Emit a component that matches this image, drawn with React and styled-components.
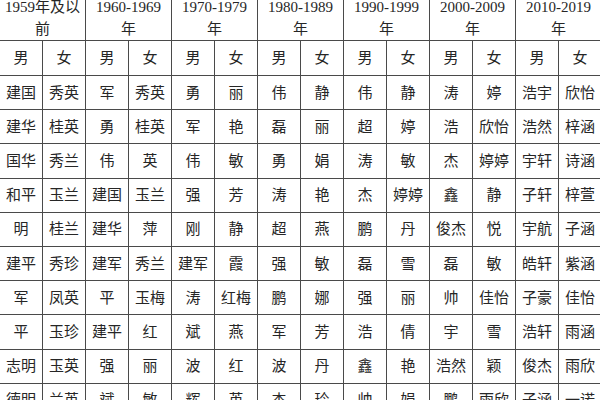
import React from 'react'
import styled, { createGlobalStyle } from 'styled-components'

const GlobalStyle = createGlobalStyle`
  html, body {
    margin: 0;
    padding: 0;
    background: #fff;
    overflow: hidden;
  }
`

const Page = styled.div`
  width: 600px;
  height: 400px;
  overflow: hidden;
`

const NameTable = styled.table`
  table-layout: fixed;
  border-collapse: separate;
  border-spacing: 0;
  width: 602px;
  margin-top: -4px;
  font-family: 'Liberation Serif', 'Noto Sans CJK SC', serif;
  font-size: 15px;
  color: #262626;
`

const Col = styled.col`
  width: 43px;
`

const HeadCell = styled.th`
  height: 45px;
  padding: 0;
  font-weight: 400;
  line-height: 22px;
  text-align: center;
  vertical-align: middle;
  border-right: 1px solid #4a4a4a;
  border-bottom: 1px solid #4a4a4a;
  box-sizing: border-box;
  white-space: nowrap;
`

const Row = styled.tr`
  height: ${p => p.$h}px;
`

const Cell = styled.td`
  padding: 0;
  text-align: center;
  vertical-align: middle;
  line-height: 18px;
  border-right: 1px solid #4a4a4a;
  border-bottom: 1px solid #4a4a4a;
  box-sizing: border-box;
  white-space: nowrap;
  overflow: hidden;
`

const groups = [
  ['1959年及以', '前'],
  ['1960-1969', '年'],
  ['1970-1979', '年'],
  ['1980-1989', '年'],
  ['1990-1999', '年'],
  ['2000-2009', '年'],
  ['2010-2019', '年'],
]

const rows = [
  ['建国', '秀英', '军', '秀英', '勇', '丽', '伟', '静', '伟', '静', '涛', '婷', '浩宇', '欣怡'],
  ['建华', '桂英', '勇', '桂英', '军', '艳', '磊', '丽', '超', '婷', '浩', '欣怡', '浩然', '梓涵'],
  ['国华', '秀兰', '伟', '英', '伟', '敏', '勇', '娟', '涛', '敏', '杰', '婷婷', '宇轩', '诗涵'],
  ['和平', '玉兰', '建国', '玉兰', '强', '芳', '涛', '艳', '杰', '婷婷', '鑫', '静', '子轩', '梓萱'],
  ['明', '桂兰', '建华', '萍', '刚', '静', '超', '燕', '鹏', '丹', '俊杰', '悦', '宇航', '子涵'],
  ['建平', '秀珍', '建军', '秀兰', '建军', '霞', '强', '敏', '磊', '雪', '磊', '敏', '皓轩', '紫涵'],
  ['军', '凤英', '平', '玉梅', '涛', '红梅', '鹏', '娜', '强', '丽', '帅', '佳怡', '子豪', '佳怡'],
  ['平', '玉珍', '建平', '红', '斌', '燕', '军', '芳', '浩', '倩', '宇', '雪', '浩轩', '雨涵'],
  ['志明', '玉英', '强', '丽', '波', '红', '波', '丹', '鑫', '艳', '浩然', '颖', '俊杰', '雨欣'],
  ['德明', '兰英', '斌', '敏', '辉', '英', '杰', '玲', '帅', '娟', '鹏', '雨欣', '子涵', '一诺'],
]

export default function App() {
  return (
    <Page>
      <GlobalStyle />
      <NameTable>
        <colgroup>
          {Array.from({ length: 14 }).map((_, i) => <Col key={i} />)}
        </colgroup>
        <thead>
          <tr>
            {groups.map(([a, b]) => (
              <HeadCell key={a} colSpan={2}>{a}<br />{b}</HeadCell>
            ))}
          </tr>
        </thead>
        <tbody>
          <Row $h={35}>
            {groups.map(([a]) => (
              <React.Fragment key={a}>
                <Cell>男</Cell>
                <Cell>女</Cell>
              </React.Fragment>
            ))}
          </Row>
          {rows.map((r, i) => (
            <Row key={i} $h={34.2}>
              {r.map((name, j) => <Cell key={j}>{name}</Cell>)}
            </Row>
          ))}
        </tbody>
      </NameTable>
    </Page>
  )
}
